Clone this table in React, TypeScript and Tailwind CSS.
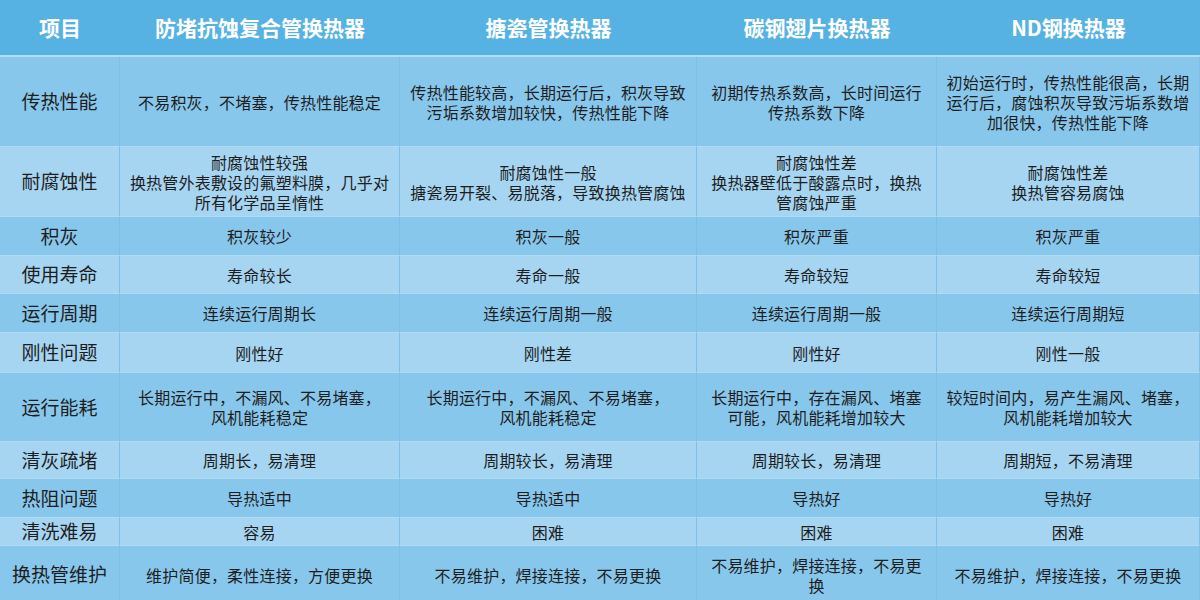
import { Fragment } from "react";

interface Row {
  name: string;
  h: string;
  cells: string[][];
}

const heads = ["项目", "防堵抗蚀复合管换热器", "搪瓷管换热器", "碳钢翅片换热器", "ND钢换热器"];

const rows: Row[] = [
  {
    name: "传热性能",
    h: "h-[90px]",
    cells: [
      ["不易积灰，不堵塞，传热性能稳定"],
      ["传热性能较高，长期运行后，积灰导致", "污垢系数增加较快，传热性能下降"],
      ["初期传热系数高，长时间运行", "传热系数下降"],
      ["初始运行时，传热性能很高，长期", "运行后，腐蚀积灰导致污垢系数增", "加很快，传热性能下降"],
    ],
  },
  {
    name: "耐腐蚀性",
    h: "h-[70px]",
    cells: [
      ["耐腐蚀性较强", "换热管外表敷设的氟塑料膜，几乎对", "所有化学品呈惰性"],
      ["耐腐蚀性一般", "搪瓷易开裂、易脱落，导致换热管腐蚀"],
      ["耐腐蚀性差", "换热器壁低于酸露点时，换热", "管腐蚀严重"],
      ["耐腐蚀性差", "换热管容易腐蚀"],
    ],
  },
  { name: "积灰", h: "h-[39px]", cells: [["积灰较少"], ["积灰一般"], ["积灰严重"], ["积灰严重"]] },
  { name: "使用寿命", h: "h-[38px]", cells: [["寿命较长"], ["寿命一般"], ["寿命较短"], ["寿命较短"]] },
  {
    name: "运行周期",
    h: "h-[39px]",
    cells: [["连续运行周期长"], ["连续运行周期一般"], ["连续运行周期一般"], ["连续运行周期短"]],
  },
  { name: "刚性问题", h: "h-[40px]", cells: [["刚性好"], ["刚性差"], ["刚性好"], ["刚性一般"]] },
  {
    name: "运行能耗",
    h: "h-[69px]",
    cells: [
      ["长期运行中，不漏风、不易堵塞，", "风机能耗稳定"],
      ["长期运行中，不漏风、不易堵塞，", "风机能耗稳定"],
      ["长期运行中，存在漏风、堵塞", "可能，风机能耗增加较大"],
      ["较短时间内，易产生漏风、堵塞，", "风机能耗增加较大"],
    ],
  },
  {
    name: "清灰疏堵",
    h: "h-[37px]",
    cells: [["周期长，易清理"], ["周期较长，易清理"], ["周期较长，易清理"], ["周期短，不易清理"]],
  },
  { name: "热阻问题", h: "h-[39px]", cells: [["导热适中"], ["导热适中"], ["导热好"], ["导热好"]] },
  { name: "清洗难易", h: "h-[28px]", cells: [["容易"], ["困难"], ["困难"], ["困难"]] },
  {
    name: "换热管维护",
    h: "h-[58px]",
    cells: [
      ["维护简便，柔性连接，方便更换"],
      ["不易维护，焊接连接，不易更换"],
      ["不易维护，焊接连接，不易更", "换"],
      ["不易维护，焊接连接，不易更换"],
    ],
  },
];

const font = { fontFamily: '"Noto Sans CJK SC", "Noto Sans", sans-serif' };

export default function App() {
  return (
    <div className="w-[1200px] h-[600px] overflow-hidden bg-[#88c7ec]" style={font}>
      <div className="grid grid-cols-[120px_280px_297px_240px_263px]">
        {/* Header */}
        {heads.map((t) => (
          <div
            key={t}
            className="h-[57px] flex items-center justify-center bg-[#55b2e2] border-b-2 border-[#b4ddf5] text-white text-[21px] font-bold"
          >
            {t}
          </div>
        ))}

        {rows.map((r, i) => {
          const bg = i % 2 === 0 ? "bg-[#88c7ec]" : "bg-[#a6d5f2]";
          return (
            <Fragment key={r.name}>
              <div
                className={`${r.h} ${bg} flex items-center justify-center border-r border-b border-r-[#7dbfe8] border-b-[#b0dbf4] text-[19px] text-[#1e1e1e]`}
              >
                {r.name}
              </div>
              {r.cells.map((lines, j) => (
                <div
                  key={j}
                  className={`${r.h} ${bg} flex flex-col items-center justify-center border-r border-b border-r-[#7dbfe8] border-b-[#b0dbf4] text-[16px] leading-[20px] tracking-[0.2px] text-[#1e1e1e] text-center`}
                >
                  {lines.map((l, k) => (
                    <span key={k} className="whitespace-nowrap">
                      {l}
                    </span>
                  ))}
                </div>
              ))}
            </Fragment>
          );
        })}
      </div>
    </div>
  );
}
